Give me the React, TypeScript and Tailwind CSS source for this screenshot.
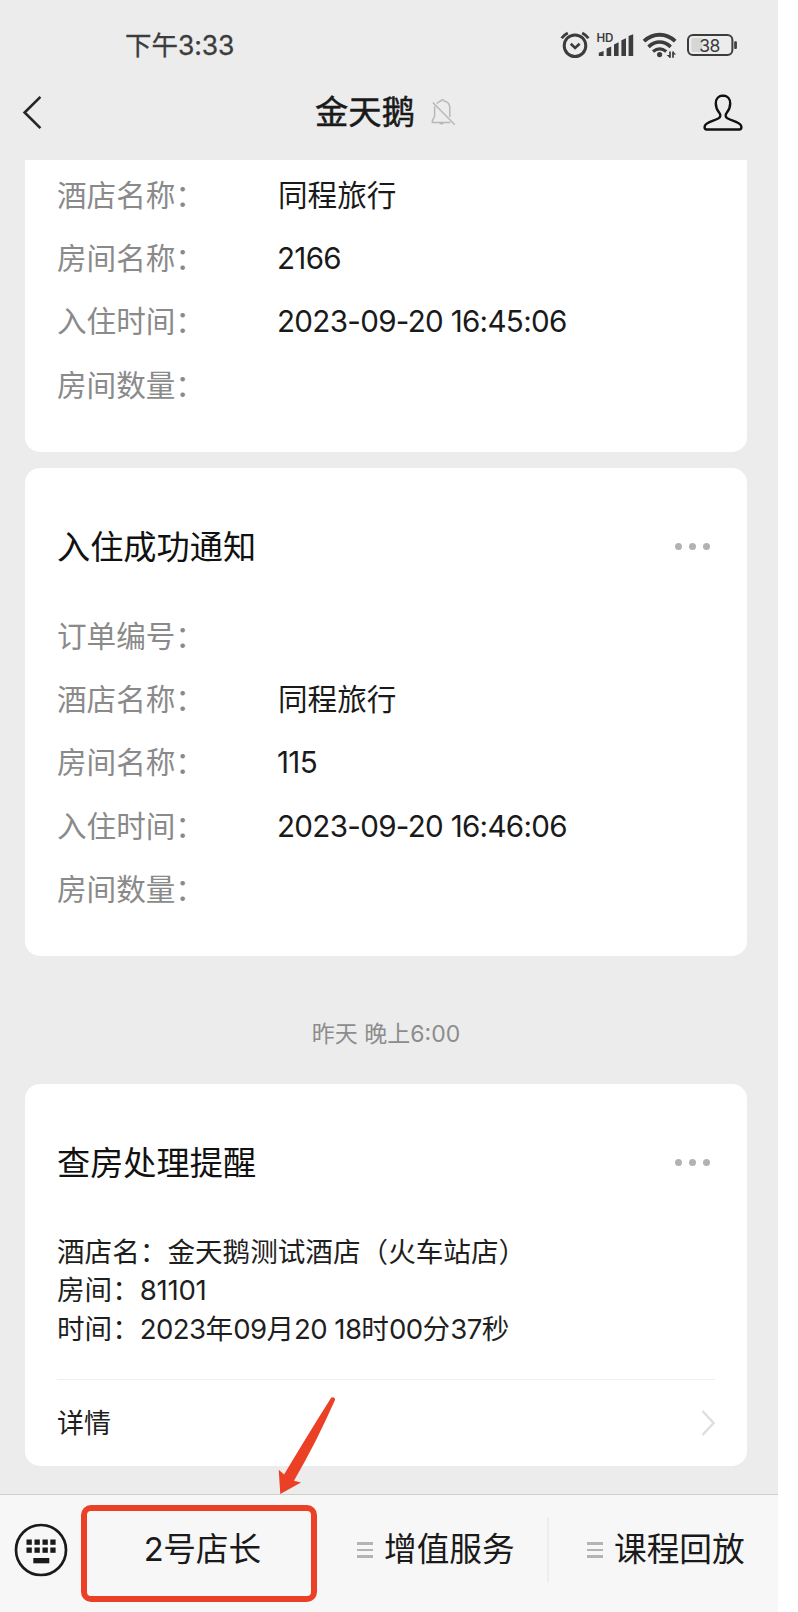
import type { ReactNode } from 'react'

type Row = { label: string; value?: string; cjk?: boolean }

const firstRows: Row[] = [
  { label: '酒店名称：', value: '同程旅行', cjk: true },
  { label: '房间名称：', value: '2166' },
  { label: '入住时间：', value: '2023-09-20 16:45:06' },
  { label: '房间数量：' },
]

const secondRows: Row[] = [
  { label: '订单编号：' },
  { label: '酒店名称：', value: '同程旅行', cjk: true },
  { label: '房间名称：', value: '115' },
  { label: '入住时间：', value: '2023-09-20 16:46:06' },
  { label: '房间数量：' },
]

function Num({ children }: { children: ReactNode }) {
  return <span className="tracking-[-0.600px]">{children}</span>
}

function StatusIcons() {
  return (
    <div className="flex items-center text-[#3c3c3c]">
      <svg width="30" height="28" viewBox="560 31 30 28" fill="none" stroke="currentColor">
        <circle cx="575" cy="45.7" r="10.8" strokeWidth="3" />
        <path d="M570.8 43.8l4.3 4.2 4.5-4.2" strokeWidth="2.6" />
        <path d="M561.6 38.2c1.6-2.2 3.6-3.9 6.2-5.2M588.4 38.2c-1.6-2.2-3.6-3.9-6.2-5.2" strokeWidth="2.8" />
      </svg>
      <svg className="ml-[6px]" width="39" height="28" viewBox="596 31 39 28" fill="currentColor">
        <text x="596.4" y="42" fontSize="11.6" fontWeight="600" fontFamily="Inter, sans-serif">HD</text>
        <path d="M598.8 56v-3.3l4.8-1.8V56zM606.6 56v-7.5l4.6-2V56zM614 56V44.500l4.600-2.200V56zM621.400 56V40.300l4.600-2V56zM628.600 56V36l4.600-1.800V56z" />
      </svg>
      <svg className="ml-[7px]" width="36" height="28" viewBox="642 31 36 28" fill="none" stroke="currentColor">
        <path d="M644 41.200c9.500-8.600 21.800-8.600 31.200 0" strokeWidth="3.800" />
        <path d="M648.500 46.800c7-6.200 15.200-6.200 22.200 0" strokeWidth="3.600" />
        <path d="M653 51.600c4.300-3.500 9-3.500 13.200 0" strokeWidth="3.200" />
        <circle cx="659.600" cy="54.600" r="2.600" fill="currentColor" stroke="none" />
        <path d="M670 51.600v6.200M673 51.600v6.200" strokeWidth="1.700" />
        <path d="M670 58l-3.400-3h3.400zM673 51.400l3.200 3H673z" fill="currentColor" stroke="none" />
      </svg>
      <svg className="ml-[8px]" width="53" height="28" viewBox="686 31 53 28" fill="none">
        <rect x="691.400" y="38" width="11" height="14" rx="2" fill="#d6d6d6" />
        <rect x="688" y="35" width="44.400" height="20" rx="5" stroke="currentColor" strokeWidth="2" />
        <rect x="734.200" y="41.300" width="2.700" height="7.600" rx="1" fill="currentColor" />
        <text x="709.600" y="51.600" textAnchor="middle" fontSize="17.500" letterSpacing="-0.500" fontFamily="Inter, sans-serif" fill="currentColor">38</text>
      </svg>
    </div>
  )
}

function NavBar() {
  return (
    <div className="h-[72px] grid grid-cols-3 items-center pl-[22px] pr-[34px] text-[#1a1a1a]">
      <svg width="22" height="36" viewBox="22 94 22 36" fill="none">
        <path d="M40.400 96.800L24.600 112.500l15.800 15.700" stroke="#262626" strokeWidth="2.600" />
      </svg>
      <div className="flex items-center justify-center -mr-[7px]">
        <h1 className="text-[33.300px] leading-[40px] whitespace-nowrap [-webkit-text-stroke:0.500px_#1a1a1a]">金天鹅</h1>
        <svg className="ml-[15px] shrink-0" width="28" height="30" viewBox="430 97 28 30" fill="none" stroke="#b8b8b8" strokeWidth="1.500">
          <path d="M436.800 103.600c1.100-1.400 2.600-2.200 4.200-2.500.1-1.800 3-1.800 3.100 0 3.700.8 5.700 3.400 5.700 7v9M434.600 106.200v9.800l-2.300 5v1.400h18" />
          <path d="M432.800 102.500l22 22.300M439.800 122.800c.7 1.400 2.700 1.400 3.400 0" />
        </svg>
      </div>
      <svg className="justify-self-end" width="42" height="40" viewBox="702 92.500 42 40" fill="none">
        <path d="M723 96c-4.500 0-7.200 3.200-7.200 8 0 4.400 1.300 6.800 3.600 9.600 1.400 1.700 1.300 4-.8 5.200-3.800 1.900-8 3.300-11.200 4.900-1.900 1-2.800 2.300-2.800 4.100 0 1.400.7 2.200 2 2.200h32.800c1.300 0 2-.8 2-2.200 0-1.800-.9-3.100-2.800-4.100-3.200-1.600-7.400-3-11.200-4.900-2.100-1.200-2.200-3.500-.8-5.200 2.300-2.800 3.600-5.200 3.600-9.600 0-4.800-2.700-8-7.200-8z" stroke="#111" strokeWidth="2.400" />
      </svg>
    </div>
  )
}

function InfoRows({ rows }: { rows: Row[] }) {
  return (
    <dl className="text-[29.600px]">
      {rows.map((row) => (
        <div key={row.label} className="flex h-[63.200px] items-center leading-[40px]">
          <dt className="w-[221px] text-[#8a8a8a]">{row.label}</dt>
          <dd className="text-[#1a1a1a]">
            {row.cjk ? row.value : <span className="-ml-px tracking-[-0.700px]">{row.value}</span>}
          </dd>
        </div>
      ))}
    </dl>
  )
}

function CardTitle({ title }: { title: string }) {
  return (
    <div className="flex h-[56px] items-center justify-between pr-[5px]">
      <h2 className="pt-[2px] text-[33.200px] leading-[44px] text-[#111]">{title}</h2>
      <div className="flex gap-[7px]">
        <span className="size-[7px] rounded-full bg-[#b2b2b2]" />
        <span className="size-[7px] rounded-full bg-[#b2b2b2]" />
        <span className="size-[7px] rounded-full bg-[#b2b2b2]" />
      </div>
    </div>
  )
}

function MenuIcon() {
  return (
    <div className="mr-[11px] flex w-[16px] flex-col gap-[4px]">
      <span className="h-[2.500px] bg-[#b4b4b4]" />
      <span className="h-[2.500px] bg-[#b4b4b4]" />
      <span className="h-[2.500px] bg-[#b4b4b4]" />
    </div>
  )
}

function KeyboardIcon() {
  return (
    <svg width="54" height="54" viewBox="0 0 54 54" fill="#1a1a1a">
      <circle cx="27" cy="27" r="25" fill="none" stroke="#1a1a1a" strokeWidth="2.700" />
      {[12.500, 20.500, 28.500, 36.300].map((x) => (
        <g key={x}>
          <rect x={x} y="16.500" width="5.300" height="5.300" />
          <rect x={x} y="24.500" width="5.300" height="5.300" />
        </g>
      ))}
      <rect x="19.300" y="35" width="16" height="5.300" />
    </svg>
  )
}

export default function App() {
  return (
    <div className="h-[1612px] w-[798px] overflow-hidden bg-white font-['Inter','Noto_Sans_CJK_SC',sans-serif]">
      <div className="relative flex h-full w-[778px] flex-col bg-[#ececec]">
        <header className="h-[160px] shrink-0">
          <div className="flex h-[76px] items-center justify-between pt-[14px] pl-[125px] pr-[39px]">
            <span className="text-[26.500px] leading-[32px] text-[#3c3c3c] [-webkit-text-stroke:0.300px_#3c3c3c]">
              下午<span className="tracking-[-0.100px]">3:33</span>
            </span>
            <StatusIcons />
          </div>
          <NavBar />
        </header>

        <main className="flex-1 pl-[25px] pr-[31px]">
          <section className="h-[292px] rounded-b-[15px] bg-white px-[32px] pt-[3.500px]">
            <InfoRows rows={firstRows} />
          </section>

          <section className="mt-[16px] h-[488px] rounded-[15px] bg-white px-[32px] pt-[50px]">
            <CardTitle title="入住成功通知" />
            <div className="pt-[30.500px]">
              <InfoRows rows={secondRows} />
            </div>
          </section>

          <p className="flex h-[128px] items-center justify-center pt-[28px] text-[23px] text-[#8c8c8c]">
            昨天 晚上6:00
          </p>

          <section className="h-[382px] rounded-[15px] bg-white px-[32px] pt-[50px]">
            <CardTitle title="查房处理提醒" />
            <div className="mt-[43px] text-[27.600px] leading-[38.300px] text-[#1f1f1f]">
              <p>酒店名：金天鹅测试酒店（火车站店）</p>
              <p>房间：<span className="tracking-[-0.300px]">81101</span></p>
              <p>
                时间：<Num>2023</Num>年<Num>09</Num>月<Num>20 18</Num>时<Num>00</Num>分<Num>37</Num>秒
              </p>
            </div>
            <div className="mt-[31px] flex h-[87px] items-center justify-between border-t border-[#efefef] text-[27px] text-[#1f1f1f]">
              <span className="pt-[3px]">详情</span>
              <svg width="14" height="28" viewBox="0 0 14 28" fill="none">
                <path d="M1.500 2l11 12-11 12" stroke="#dedede" strokeWidth="2.400" />
              </svg>
            </div>
          </section>
        </main>

        <footer className="flex h-[118px] shrink-0 border-t border-[#cfcfcf] bg-[#f7f7f7] text-[32.700px] text-[#1a1a1a]">
          <div className="flex h-[110px] w-full items-center">
            <div className="ml-[14px] w-[54px]">
              <KeyboardIcon />
            </div>
            <div className="mt-[7px] ml-[13px] flex h-[97px] w-[236px] items-center justify-center rounded-[10px] border-[6px] border-[#ec4026] pb-[7px]">
              <span className="ml-[7px]"><Num>2</Num>号店长</span>
            </div>
            <div className="flex flex-1 items-center pl-[40px]">
              <MenuIcon />
              <span>增值服务</span>
            </div>
            <div className="flex h-[66px] w-[231px] items-center border-l-2 border-[#eeeeee] pl-[38px]">
              <MenuIcon />
              <span>课程回放</span>
            </div>
          </div>
        </footer>

        {/* pointer to the highlighted menu entry */}
        <svg className="absolute left-[270px] top-[1390px]" width="76" height="110" viewBox="270 1390 76 110">
          <path d="M280.300 1494L278.700 1469.800l5.400 4.600c15-25 31-51.500 46.900-76.400 1.200-1.600 4.600-.2 4 2-12 27-25.600 54.500-41 80.700l7 1.900z" fill="#ec4026" />
        </svg>
      </div>
    </div>
  )
}
